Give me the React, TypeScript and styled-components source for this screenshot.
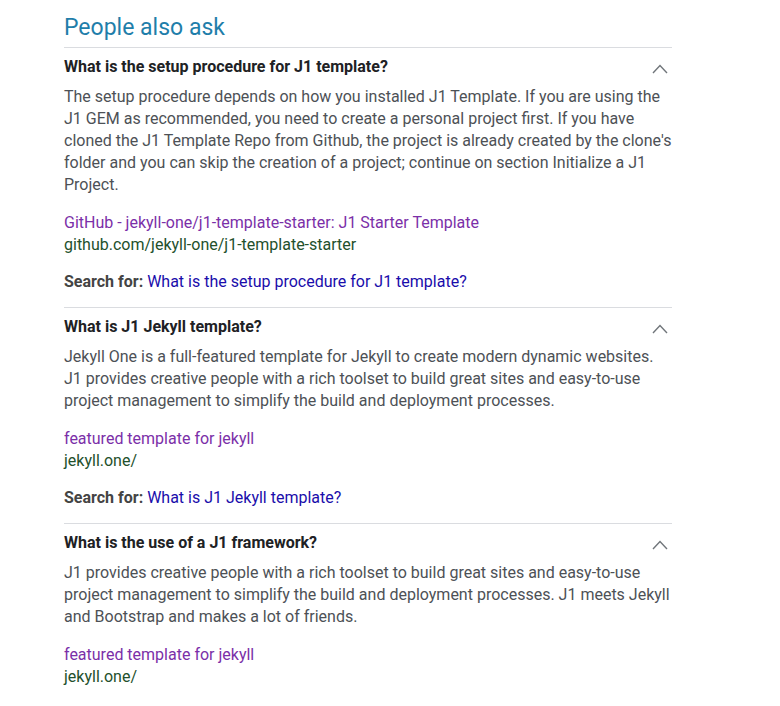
import React from "react";
import styled, { createGlobalStyle } from "styled-components";

const Global = createGlobalStyle`
  html, body { margin: 0; padding: 0; background: #ffffff; }
  body { font-family: Roboto, "Liberation Sans", Arial, sans-serif; }
`;

const Page = styled.div`
  padding: 12px 0 0 64px;
  width: 608px;
`;

const Title = styled.h2`
  margin: 0 0 3px 0;
  font-size: 23px;
  line-height: 32px;
  font-weight: 400;
  color: #1f7eaa;
`;

const Section = styled.section`
  border-top: 1px solid #dadce0;
  padding: 8px 0 14px 0;
`;

const QuestionRow = styled.div`
  display: flex;
  align-items: center;
  justify-content: space-between;
  padding-right: 4px;
`;

const Question = styled.h3`
  margin: 0;
  font-size: 16px;
  line-height: 22px;
  font-weight: 700;
  color: #202124;
`;

const Chevron = styled.svg`
  width: 16px;
  height: 11px;
  flex: none;
  margin-top: 2px;
`;

const Answer = styled.p`
  margin: 8px 0 0 0;
  font-size: 16px;
  line-height: 22px;
  color: #4d5156;
`;

const Source = styled.div`
  margin-top: 16px;
  display: flex;
  flex-direction: column;
  font-size: 16px;
  line-height: 22px;
`;

const SourceLink = styled.a`
  color: #7b2fa8;
  text-decoration: none;
`;

const SourceUrl = styled.span`
  color: #23502c;
`;

const SearchFor = styled.div`
  margin-top: 15px;
  font-size: 16px;
  line-height: 22px;
  color: #4d5156;
`;

const SearchLabel = styled.b`
  font-weight: 700;
  color: #444444;
`;

const SearchLink = styled.a`
  color: #1a0dab;
  text-decoration: none;
`;

type Item = {
  q: string;
  a: string;
  link: string;
  url: string;
  search?: string;
};

const items: Item[] = [
  {
    q: "What is the setup procedure for J1 template?",
    a: "The setup procedure depends on how you installed J1 Template. If you are using the J1 GEM as recommended, you need to create a personal project first. If you have cloned the J1 Template Repo from Github, the project is already created by the clone's folder and you can skip the creation of a project; continue on section Initialize a J1 Project.",
    link: "GitHub - jekyll-one/j1-template-starter: J1 Starter Template",
    url: "github.com/jekyll-one/j1-template-starter",
    search: "What is the setup procedure for J1 template?",
  },
  {
    q: "What is J1 Jekyll template?",
    a: "Jekyll One is a full-featured template for Jekyll to create modern dynamic websites. J1 provides creative people with a rich toolset to build great sites and easy-to-use project management to simplify the build and deployment processes.",
    link: "featured template for jekyll",
    url: "jekyll.one/",
    search: "What is J1 Jekyll template?",
  },
  {
    q: "What is the use of a J1 framework?",
    a: "J1 provides creative people with a rich toolset to build great sites and easy-to-use project management to simplify the build and deployment processes. J1 meets Jekyll and Bootstrap and makes a lot of friends.",
    link: "featured template for jekyll",
    url: "jekyll.one/",
  },
];

export default function App() {
  return (
    <>
      <Global />
      <Page>
        <Title>People also ask</Title>
        {items.map((it, i) => (
          <Section key={i}>
            <QuestionRow>
              <Question>{it.q}</Question>
              <Chevron viewBox="0 0 16 11">
                <polyline
                  points="1,10 8,2.5 15,10"
                  fill="none"
                  stroke="#70757a"
                  strokeWidth="1.4"
                />
              </Chevron>
            </QuestionRow>
            <Answer>{it.a}</Answer>
            <Source>
              <SourceLink href="#">{it.link}</SourceLink>
              <SourceUrl>{it.url}</SourceUrl>
            </Source>
            {it.search && (
              <SearchFor>
                <SearchLabel>Search for:</SearchLabel>{" "}
                <SearchLink href="#">{it.search}</SearchLink>
              </SearchFor>
            )}
          </Section>
        ))}
      </Page>
    </>
  );
}
